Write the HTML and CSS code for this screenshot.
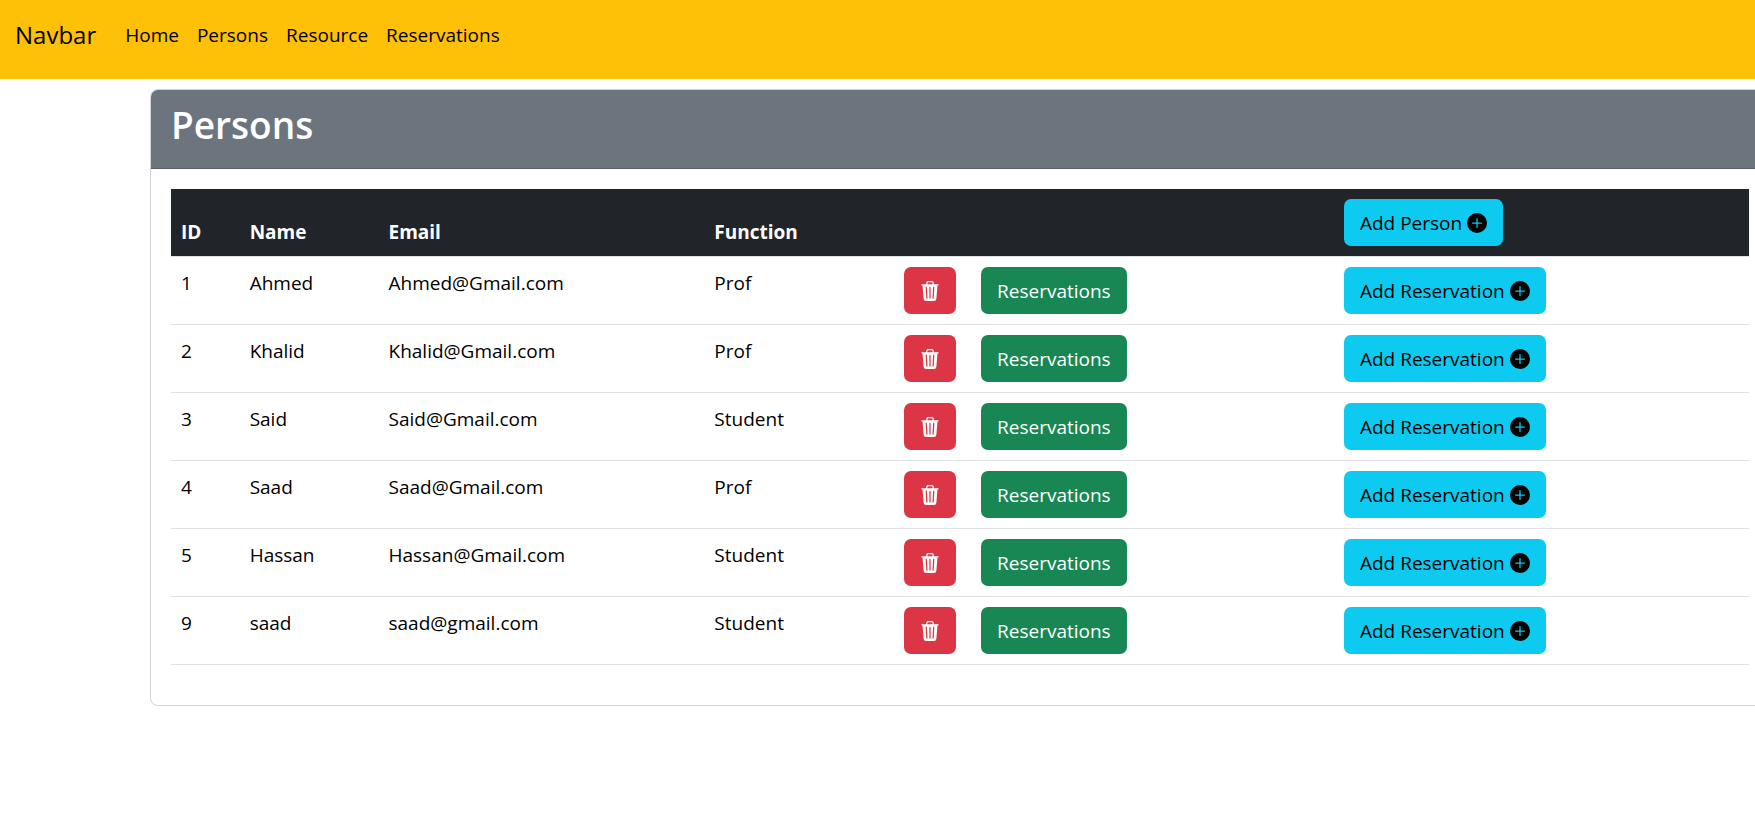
FILE: index.html
```
<!DOCTYPE html>
<html lang="en">
<head>
<meta charset="utf-8">
<title>Persons</title>
<link rel="stylesheet" href="styles.css">
</head>
<body>
<svg class="sprite" aria-hidden="true">
  <symbol id="trash" viewBox="0 0 16 16"><path d="M11 1.5v1h3.5a.5.5 0 0 1 0 1h-.538l-.853 10.66A2 2 0 0 1 11.115 16h-6.23a2 2 0 0 1-1.994-1.84L2.038 3.5H1.5a.5.5 0 0 1 0-1H5v-1A1.5 1.5 0 0 1 6.5 0h3A1.5 1.5 0 0 1 11 1.5m-5 0v1h4v-1a.5.5 0 0 0-.5-.5h-3a.5.5 0 0 0-.5.5M4.5 5.029l.5 8.5a.5.5 0 1 0 .998-.06l-.5-8.5a.5.5 0 1 0-.998.06m6.53-.528a.5.5 0 0 0-.528.47l-.5 8.5a.5.5 0 0 0 .998.058l.5-8.5a.5.5 0 0 0-.47-.528M8 4.5a.5.5 0 0 0-.5.5v8.5a.5.5 0 0 0 1 0V5a.5.5 0 0 0-.5-.5"/></symbol>
  <symbol id="plus" viewBox="0 0 16 16"><path d="M16 8A8 8 0 1 1 0 8a8 8 0 0 1 16 0M8.5 4.5a.5.5 0 0 0-1 0v3h-3a.5.5 0 0 0 0 1h3v3a.5.5 0 0 0 1 0v-3h3a.5.5 0 0 0 0-1h-3z"/></symbol>
</svg>
<nav class="navbar">
  <a class="brand" href="#">Navbar</a>
  <ul class="nav-list">
    <li><a class="nav-link" href="#">Home</a></li>
    <li><a class="nav-link" href="#">Persons</a></li>
    <li><a class="nav-link" href="#">Resource</a></li>
    <li><a class="nav-link" href="#">Reservations</a></li>
  </ul>
</nav>
<main class="card">
  <header class="card-header"><h1 class="card-title">Persons</h1></header>
  <div class="card-body">
    <table class="table">
      <colgroup>
        <col class="col-id"><col class="col-name"><col class="col-email"><col class="col-function"><col class="col-delete"><col class="col-list"><col class="col-add">
      </colgroup>
      <thead>
        <tr><th>ID</th><th>Name</th><th>Email</th><th>Function</th><th></th><th></th><th><button class="btn btn-info">Add Person <svg class="icon"><use href="#plus"/></svg></button></th></tr>
      </thead>
      <tbody>
        <tr><td>1</td><td>Ahmed</td><td>Ahmed@Gmail.com</td><td>Prof</td><td><button class="btn btn-danger" aria-label="Delete"><svg class="icon"><use href="#trash"/></svg></button></td><td><button class="btn btn-success">Reservations</button></td><td><button class="btn btn-info">Add Reservation <svg class="icon"><use href="#plus"/></svg></button></td></tr>
        <tr><td>2</td><td>Khalid</td><td>Khalid@Gmail.com</td><td>Prof</td><td><button class="btn btn-danger" aria-label="Delete"><svg class="icon"><use href="#trash"/></svg></button></td><td><button class="btn btn-success">Reservations</button></td><td><button class="btn btn-info">Add Reservation <svg class="icon"><use href="#plus"/></svg></button></td></tr>
        <tr><td>3</td><td>Said</td><td>Said@Gmail.com</td><td>Student</td><td><button class="btn btn-danger" aria-label="Delete"><svg class="icon"><use href="#trash"/></svg></button></td><td><button class="btn btn-success">Reservations</button></td><td><button class="btn btn-info">Add Reservation <svg class="icon"><use href="#plus"/></svg></button></td></tr>
        <tr><td>4</td><td>Saad</td><td>Saad@Gmail.com</td><td>Prof</td><td><button class="btn btn-danger" aria-label="Delete"><svg class="icon"><use href="#trash"/></svg></button></td><td><button class="btn btn-success">Reservations</button></td><td><button class="btn btn-info">Add Reservation <svg class="icon"><use href="#plus"/></svg></button></td></tr>
        <tr><td>5</td><td>Hassan</td><td>Hassan@Gmail.com</td><td>Student</td><td><button class="btn btn-danger" aria-label="Delete"><svg class="icon"><use href="#trash"/></svg></button></td><td><button class="btn btn-success">Reservations</button></td><td><button class="btn btn-info">Add Reservation <svg class="icon"><use href="#plus"/></svg></button></td></tr>
        <tr><td>9</td><td>saad</td><td>saad@gmail.com</td><td>Student</td><td><button class="btn btn-danger" aria-label="Delete"><svg class="icon"><use href="#trash"/></svg></button></td><td><button class="btn btn-success">Reservations</button></td><td><button class="btn btn-info">Add Reservation <svg class="icon"><use href="#plus"/></svg></button></td></tr>
      </tbody>
    </table>
  </div>
</main>
</body>
</html>
```
FILE: styles.css
```
* { box-sizing: border-box; }
body {
  margin: 0;
  background: #fff;
  color: #000;
  font-family: "Segoe UI", "Open Sans", "Noto Sans", sans-serif;
  font-size: 19px;
  line-height: 30px;
  overflow-x: hidden;
}
.sprite { display: none; }
.navbar {
  display: flex;
  align-items: flex-start;
  gap: 20px;
  padding: 10px 15px 19px;
  background: #ffc107;
}
.brand {
  padding: 6px 0;
  font-size: 24px;
  line-height: 38px;
  color: #000;
  text-decoration: none;
}
.nav-list {
  display: flex;
  margin: 0;
  padding: 0;
  list-style: none;
}
.nav-link {
  display: block;
  padding: 10px 9px;
  color: #000;
  text-decoration: none;
}
.card {
  margin: 10px -15px 0 150px;
  border: 1px solid #d2d3d4;
  border-radius: 8px;
}
.card-header {
  padding: 11px 20px 19px;
  background: #6c757d;
  border-bottom: 1px solid #596067;
  border-radius: 7px 7px 0 0;
}
.card-title {
  margin: 0;
  color: #fff;
  font-size: 37px;
  font-weight: 600;
  line-height: 48px;
}
.card-body { padding: 20px 20px 40px; }
.table {
  width: 100%;
  table-layout: fixed;
  border-collapse: separate;
  border-spacing: 0;
}
.col-id { width: 4.35%; }
.col-name { width: 8.8%; }
.col-email { width: 20.65%; }
.col-function { width: 12%; }
.col-delete { width: 4.9%; }
.col-list { width: 23%; }
.table th, .table td {
  padding: 10px;
  text-align: left;
  vertical-align: top;
  line-height: 32px;
  border-bottom: 1px solid #dee2e6;
}
.table th {
  vertical-align: bottom;
  line-height: 28px;
  color: #fff;
  background: #212529;
  font-weight: 700;
}
.btn {
  display: flex;
  align-items: center;
  gap: 5px;
  height: 47px;
  padding: 0 15px;
  border: 1px solid transparent;
  border-radius: 7px;
  font: inherit;
  font-weight: 400;
  white-space: nowrap;
  cursor: pointer;
}
.btn-info { background: #0dcaf0; color: #000; }
.btn-danger { background: #dc3545; color: #fff; }
.btn-success { background: #198754; color: #fff; }
.icon {
  width: 20px;
  height: 20px;
  fill: currentColor;
}
```
